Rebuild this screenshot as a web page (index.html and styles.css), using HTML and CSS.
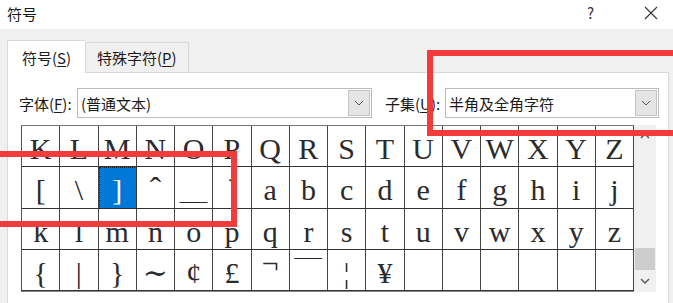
FILE: index.html
```html
<!DOCTYPE html>
<html>
<head>
    <title>符号</title>
    <link rel="stylesheet" href="styles.css">
</head>
<body>
    <div class="dialog">
        <div class="titlebar">
            <span class="title">符号</span>
            <span class="help">?</span>
            <span class="close">
                <svg width="14" height="14" viewBox="0 0 14 14"><path d="M1 1 L13 13 M13 1 L1 13" stroke="#333" stroke-width="1.1" fill="none"/></svg>
            </span>
        </div>

        <div class="dialog-body">
            <div class="tabs">
                <div class="tab active">符号(<u>S</u>)</div>
                <div class="tab">特殊字符(<u>P</u>)</div>
            </div>
            <div class="panel">
                <div class="font-row">
                    <label class="label font-label">字体(<u>F</u>):</label>
                    <div class="combo font-combo">
                        <span class="combo-text">(普通文本)</span>
                        <span class="drop">
                            <svg width="10" height="6" viewBox="0 0 10 6"><path d="M1 1 L5 5 L9 1" stroke="#555" stroke-width="1" fill="none"/></svg>
                        </span>
                    </div>
                    <label class="label sub-label">子集(<u>U</u>):</label>
                    <div class="combo sub-combo">
                        <span class="combo-text">半角及全角字符</span>
                        <span class="drop">
                            <svg width="10" height="6" viewBox="0 0 10 6"><path d="M1 1 L5 5 L9 1" stroke="#555" stroke-width="1" fill="none"/></svg>
                        </span>
                    </div>
                </div>

                <div class="grid-wrap">
                    <div class="char-grid" id="grid"></div>
                    <div class="scrollbar">
                        <span class="arrow">
                            <svg width="10" height="6" viewBox="0 0 10 6"><path d="M1 5 L5 1 L9 5" stroke="#606060" stroke-width="1.6" fill="none"/></svg>
                        </span>
                        <span class="track"><span class="thumb"></span></span>
                        <span class="arrow">
                            <svg width="10" height="6" viewBox="0 0 10 6"><path d="M1 1 L5 5 L9 1" stroke="#606060" stroke-width="1.6" fill="none"/></svg>
                        </span>
                    </div>
                </div>
            </div>
        </div>

        <div class="mark mark-left"></div>
        <div class="mark mark-right"></div>
    </div>

    <script>
    // [glyph, extra class]
    var chars = [
        'K','L','M','N','O','P','Q','R','S','T','U','V','W','X','Y','Z',
        '[','\\',']',['ˆ','high'],['＿','wide'],'`','a','b','c','d','e','f','g','h','i','j',
        'k','l','m','n','o','p','q','r','s','t','u','v','w','x','y','z',
        '{','|','}',['∼','tilde'],'¢','£',['¬','raised'],['￣','wide'],'¦','¥','','','','','',''
    ];
    var grid = document.getElementById('grid');
    chars.forEach(function (c, i) {
        var cell = document.createElement('div');
        cell.className = 'cell';
        if (i == 18) cell.classList.add('selected');
        if (Array.isArray(c)) {
            var g = document.createElement('span');
            g.className = c[1];
            g.textContent = c[0];
            cell.appendChild(g);
        } else {
            cell.textContent = c;
        }
        grid.appendChild(cell);
    });
    </script>
</body>
</html>
```

FILE: styles.css
```css
body {
    margin: 0;
    width: 673px;
    height: 303px;
    overflow: hidden;
    background: #f0f0f0;
    font-family: "Noto Sans CJK SC", "Noto Sans", sans-serif;
    color: #1a1a1a;
}

.dialog {
    position: relative;
    height: 303px;
}

.titlebar {
    height: 29px;
    background: #fff;
    display: flex;
    align-items: center;
    padding-left: 7px;
}
.title {
    font-size: 15px;
    flex: 1;
    margin-top: -3px;
}
.help {
    font-size: 15px;
    color: #333;
    margin-right: 50px;
    margin-top: -4px;
}
.close {
    display: flex;
    margin-right: 15px;
    margin-top: -4px;
}

.dialog-body {
    padding: 11px 4px 0 7px;
}

.tabs {
    display: flex;
    align-items: flex-end;
    height: 32px;
}
.tab {
    font-size: 15px;
    height: 30px;
    line-height: 30px;
    padding: 0 11px;
    border: 1px solid #d9d9d9;
    border-bottom: none;
    box-sizing: border-box;
    background: #f0f0f0;
}
.tab.active {
    height: 33px;
    line-height: 33px;
    background: #fff;
    padding: 0 0 0 14px;
    width: 78px;
    border-right: none;
    margin-bottom: -1px;
    position: relative;
}
.tab u, .label u {
    text-decoration-thickness: 1px;
    text-underline-offset: 2px;
}

.panel {
    background: #fff;
    border: 1px solid #d9d9d9;
    height: 240px;
    box-sizing: border-box;
}

.font-row {
    display: flex;
    align-items: center;
    margin-top: 15px;
    padding-left: 11px;
}
.label {
    font-size: 15px;
    white-space: nowrap;
}
.font-label {
    width: 58px;
}
.sub-label {
    width: 60px;
    margin-left: 13px;
}
.combo {
    height: 30px;
    border: 1px solid #bcbcbc;
    box-sizing: border-box;
    display: flex;
    align-items: center;
    justify-content: space-between;
    background: #fff;
}
.font-combo {
    width: 295px;
}
.sub-combo {
    width: 214px;
}
.combo-text {
    font-size: 15px;
    padding-left: 3px;
}
.drop {
    width: 22px;
    height: 26px;
    margin-right: 1px;
    background: #e5e5e5;
    border: 1px solid #c4c4c4;
    box-sizing: border-box;
    display: flex;
    align-items: center;
    justify-content: center;
}

.grid-wrap {
    display: flex;
    margin: 7px 0 0 13px;
}
.char-grid {
    width: 613px;
    display: grid;
    grid-template-columns: repeat(16, 1fr);
    grid-template-rows: repeat(4, 41.25px);
    border-top: 1px solid #777;
    border-left: 1px solid #555;
    border-bottom: 1px solid #888;
    box-sizing: border-box;
}
.cell {
    border-right: 1px solid #444;
    border-bottom: 1px solid #333;
    box-sizing: border-box;
    font-family: "Liberation Serif", "DejaVu Serif", serif;
    font-size: 30px;
    line-height: 37px;
    padding-top: 4px;
    text-align: center;
    color: #2b2b2b;
}
.cell.selected {
    background: #0078d7;
    color: #fff;
    outline: 1px dotted #222;
    outline-offset: -1px;
}
.cell .high {
    font-size: 34px;
}
.cell .wide {
    font-family: "Noto Sans CJK SC", sans-serif;
    font-weight: 300;
    font-size: 28px;
    line-height: 1;
}
.cell .tilde {
    font-family: "DejaVu Serif", serif;
    font-size: 30px;
}
.cell .raised {
    display: inline-block;
    line-height: 1;
    transform: translateY(-10px);
}

.scrollbar {
    width: 22px;
    height: 167px;
    background: #f0f0f0;
    display: flex;
    flex-direction: column;
}
.arrow {
    height: 22px;
    display: flex;
    align-items: center;
    justify-content: center;
}
.track {
    flex: 1;
    display: flex;
    flex-direction: column;
    justify-content: flex-end;
}
.thumb {
    height: 22px;
    background: #cdcdcd;
    margin: 0 1px;
}

.mark {
    position: absolute;
    border: 6px solid #f23c3c;
    box-sizing: border-box;
}
.mark-left {
    left: -20px;
    top: 151px;
    width: 257px;
    height: 76px;
}
.mark-right {
    left: 427px;
    top: 50px;
    width: 270px;
    height: 86px;
}
```
